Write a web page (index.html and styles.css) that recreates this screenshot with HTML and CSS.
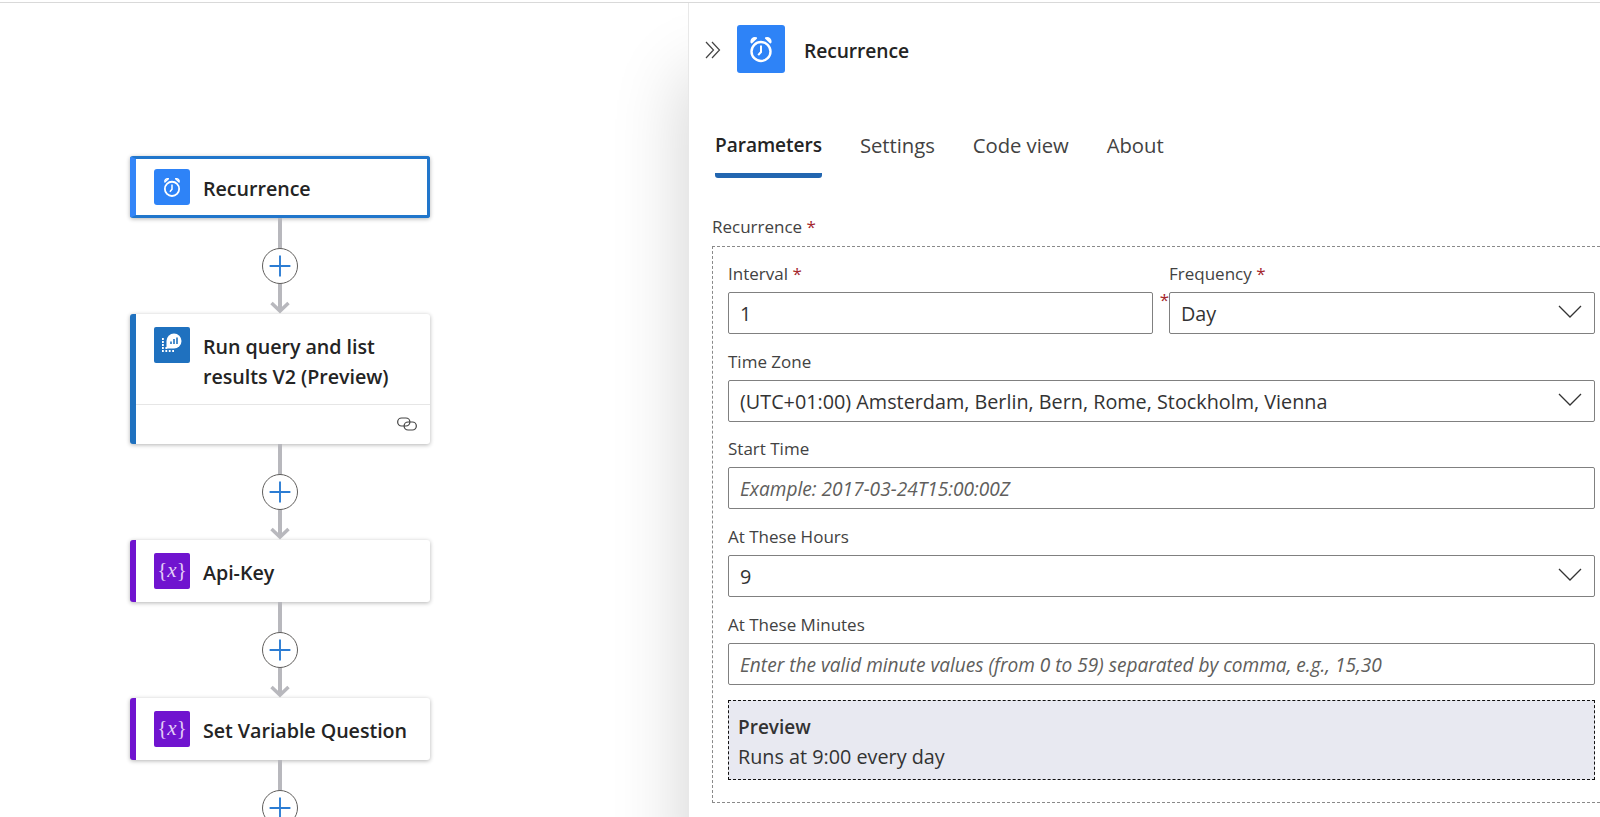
FILE: index.html
```html
<!DOCTYPE html>
<html lang="en">
<head>
<meta charset="utf-8">
<title>Recurrence</title>
<link rel="stylesheet" href="styles.css">
</head>
<body>
<svg class="defs" width="0" height="0" aria-hidden="true">
  <symbol id="clock" viewBox="0 0 48 48">
    <circle cx="24" cy="26.500" r="9.500" fill="none" stroke="#fff" stroke-width="2.400"/>
    <path d="M24 20.500v6.500l-2.800 3.200" fill="none" stroke="#fff" stroke-width="2"/>
    <path d="M14.500 17.500c-.8-3 1.600-5.300 4.700-4.500zM33.500 17.500c.8-3-1.600-5.300-4.700-4.500z" fill="none" stroke="#fff" stroke-width="1.800" stroke-linejoin="round"/>
  </symbol>
  <symbol id="connector" viewBox="0 0 36 96">
    <path d="M18 0v93" stroke="#b8b8bd" stroke-width="4" fill="none"/>
    <path d="M9.500 85l8.500 8 8.500-8" stroke="#b8b8bd" stroke-width="3.500" fill="none"/>
  </symbol>
</svg>
<div class="app">
  <main class="canvas">
    <article class="node node-selected">
      <div class="node-head">
        <svg class="node-icon icon-blue"><use href="#clock"/></svg>
        <h2 class="node-title">Recurrence</h2>
      </div>
    </article>
    <div class="link">
      <svg class="link-line"><use href="#connector"/></svg>
      <span class="add"><svg viewBox="0 0 36 36"><path d="M7 18h22M18 7v22" stroke="#2b7cd3" stroke-width="2"/></svg></span>
    </div>
    <article class="node node-query">
      <div class="node-head">
        <svg class="node-icon icon-query" viewBox="0 0 36 36">
          <path d="M12.500 14a7.500 7.500 0 1 1 7.500 7.500h-7.500z" fill="#fff"/>
          <path d="M17 17v-2.500M20 17v-5M23 17v-6.500" stroke="#1f71bf" stroke-width="1.600"/>
          <path d="M8 12h1.800M8 15h1.800M8 18h1.800M8 21h1.800M8 24h1.800M11.400 24h1.800M14.800 24h1.800M18.200 24h1.800M11.400 21h1.800" stroke="#fff" stroke-width="1.800"/>
        </svg>
        <h2 class="node-title">Run query and list results V2 (Preview)</h2>
      </div>
      <div class="node-foot">
        <svg class="chain" viewBox="0 0 18 12"><g fill="none" stroke="#444" stroke-width="1.100"><rect x=".6" y=".6" width="11" height="7.200" rx="3.600"/><rect x="6.400" y="4.200" width="11" height="7.200" rx="3.600"/></g></svg>
      </div>
    </article>
    <div class="link">
      <svg class="link-line"><use href="#connector"/></svg>
      <span class="add"><svg viewBox="0 0 36 36"><path d="M7 18h22M18 7v22" stroke="#2b7cd3" stroke-width="2"/></svg></span>
    </div>
    <article class="node node-var">
      <div class="node-head">
        <span class="node-icon icon-var">{<i>x</i>}</span>
        <h2 class="node-title">Api-Key</h2>
      </div>
    </article>
    <div class="link">
      <svg class="link-line"><use href="#connector"/></svg>
      <span class="add"><svg viewBox="0 0 36 36"><path d="M7 18h22M18 7v22" stroke="#2b7cd3" stroke-width="2"/></svg></span>
    </div>
    <article class="node node-var">
      <div class="node-head">
        <span class="node-icon icon-var">{<i>x</i>}</span>
        <h2 class="node-title">Set Variable Question</h2>
      </div>
    </article>
    <div class="link">
      <svg class="link-line"><use href="#connector"/></svg>
      <span class="add"><svg viewBox="0 0 36 36"><path d="M7 18h22M18 7v22" stroke="#2b7cd3" stroke-width="2"/></svg></span>
    </div>
  </main>
  <aside class="panel">
    <header class="panel-head">
      <svg class="collapse" viewBox="0 0 16 18"><path d="M1 1l7.500 8L1 17M7 1l7.500 8L7 17" fill="none" stroke="#444" stroke-width="1.200"/></svg>
      <svg class="panel-icon icon-blue"><use href="#clock"/></svg>
      <h1 class="panel-title">Recurrence</h1>
    </header>
    <nav class="tabs">
      <span class="tab tab-active">Parameters</span>
      <span class="tab">Settings</span>
      <span class="tab">Code view</span>
      <span class="tab">About</span>
    </nav>
    <div class="group-label">Recurrence <span class="req">*</span></div>
    <section class="group">
      <div class="pair">
        <div class="field">
          <label class="label">Interval <span class="req">*</span></label>
          <div class="input">1</div>
          <span class="req side-star">*</span>
        </div>
        <div class="field">
          <label class="label">Frequency <span class="req">*</span></label>
          <div class="input select">Day<svg class="caret" viewBox="0 0 24 13"><path d="M1 1l11 11L23 1" fill="none" stroke="#333" stroke-width="1.300"/></svg></div>
        </div>
      </div>
      <div class="field">
        <label class="label">Time Zone</label>
        <div class="input select">(UTC+01:00) Amsterdam, Berlin, Bern, Rome, Stockholm, Vienna<svg class="caret" viewBox="0 0 24 13"><path d="M1 1l11 11L23 1" fill="none" stroke="#333" stroke-width="1.300"/></svg></div>
      </div>
      <div class="field">
        <label class="label">Start Time</label>
        <div class="input placeholder">Example: 2017-03-24T15:00:00Z</div>
      </div>
      <div class="field">
        <label class="label">At These Hours</label>
        <div class="input select">9<svg class="caret" viewBox="0 0 24 13"><path d="M1 1l11 11L23 1" fill="none" stroke="#333" stroke-width="1.300"/></svg></div>
      </div>
      <div class="field">
        <label class="label">At These Minutes</label>
        <div class="input placeholder">Enter the valid minute values (from 0 to 59) separated by comma, e.g., 15,30</div>
      </div>
      <div class="preview">
        <strong class="preview-title">Preview</strong>
        <span>Runs at 9:00 every day</span>
      </div>
    </section>
  </aside>
</div>
</body>
</html>
```
FILE: styles.css
```css
* { box-sizing: border-box; }
html, body { margin: 0; height: 100%; overflow: hidden; background: #fff; }
body { font-family: "Open Sans", "Noto Sans", sans-serif; color: #242424; }
.defs { display: block; height: 0; }
h1, h2 { margin: 0; }

.app { display: flex; height: 817px; border-top: 1px solid #d9d9d9; margin-top: 2px; overflow: hidden; position: relative; }

.canvas { flex: 0 0 688px; padding: 153px 0 0 130px; display: flex; flex-direction: column; align-items: flex-start; }

.node { width: 300px; flex: none; background: #fff; border-left: 6px solid #1f71bf; border-radius: 3px; box-shadow: 0 1px 4px rgba(0,0,0,.3); }
.node-head { display: flex; align-items: flex-start; gap: 13px; padding: 13px 10px 13px 18px; }
.node-title { font-size: 19.700px; font-weight: 600; line-height: 30px; padding-top: 5px; color: #242424; letter-spacing: -.05px; }
.node-icon { width: 36px; height: 36px; flex: none; border-radius: 2px; display: block; }
.icon-blue { background: #2e83f7; border-radius: 3px; }
.icon-query { background: #1f71bf; }
.icon-var { background: #7014cf; color: #e3cdf7; font-family: "Liberation Serif", serif; font-size: 21px; line-height: 34px; text-align: center; }

.node-selected { border: 3px solid #2176cb; border-left: 6px solid #3385f8; height: 62px; }
.node-selected .node-head { padding: 10px 14px 10px 18px; }
.node-query { height: 130px; }
.node-query .node-head { height: 91px; border-bottom: 1px solid #e6e6e6; }
.node-foot { display: flex; justify-content: flex-end; padding: 12px 13px 0 0; }
.chain { width: 20px; height: 14px; display: block; }
.node-var { height: 62px; border-left-color: #7014cf; }

.link { width: 36px; height: 96px; flex: none; margin-left: 132px; position: relative; }
.link-line { width: 36px; height: 96px; display: block; }
.add { position: absolute; left: 0; top: 30px; width: 36px; height: 36px; border-radius: 50%; background: #fff; border: 1px solid #605e5c; }
.add svg { display: block; width: 34px; height: 34px; }

.panel { flex: 1; min-width: 0; background: #fff; border-left: 1px solid #e8e8e8; box-shadow: -6px 70px 66px rgba(0,0,0,.16); position: relative; }
.panel-head { display: flex; align-items: center; padding: 22px 0 0 16px; }
.collapse { width: 16px; height: 18px; flex: none; margin-top: 2px; }
.panel-icon { width: 48px; height: 48px; margin-left: 16px; flex: none; }
.panel-title { font-size: 19.300px; font-weight: 600; margin: 2px 0 0 19px; letter-spacing: -.1px; }

.tabs { display: flex; gap: 38px; margin: 59px 0 0 26px; }
.tab { font-size: 20.300px; line-height: 27px; padding-bottom: 14px; color: #424242; letter-spacing: -.05px; }
.tab-active { font-size: 19.100px; font-weight: 600; color: #242424; border-bottom: 5px solid #2266b0; border-radius: 0 0 3px 3px; }

.group-label { margin: 39px 0 0 23px; font-size: 17px; line-height: 20px; color: #424242; }
.req { color: #a4262c; }

.group { margin: 9px 0 0 23px; height: 557px; border: 1px dashed #8a8a8a; border-right: 0; padding: 17px 5px 0 15px; display: flex; flex-direction: column; gap: 17.700px; }
.pair { display: grid; grid-template-columns: 425px 426px; gap: 16px; }
.field { position: relative; display: flex; flex-direction: column; gap: 8px; }
.label { font-size: 17px; line-height: 20px; color: #424242; }
.side-star { position: absolute; right: -16px; top: 26px; font-size: 17px; line-height: 20px; }
.input { height: 42px; border: 1px solid #808080; border-radius: 2px; font-size: 19.800px; line-height: 40px; padding: 1px 11px 0; color: #333; position: relative; white-space: nowrap; overflow: hidden; }
.placeholder { font-size: 19.100px; font-style: italic; color: #605e5c; }
.caret { position: absolute; right: 12px; top: 12px; width: 24px; height: 13px; }

.preview { height: 80px; margin-top: -2px; background: #e8e9f1; border: 1px dashed #111; padding: 11px 9px; display: flex; flex-direction: column; font-size: 19.800px; line-height: 30px; color: #333; }
.preview-title { font-size: 19px; font-weight: 600; line-height: 30px; }
```
